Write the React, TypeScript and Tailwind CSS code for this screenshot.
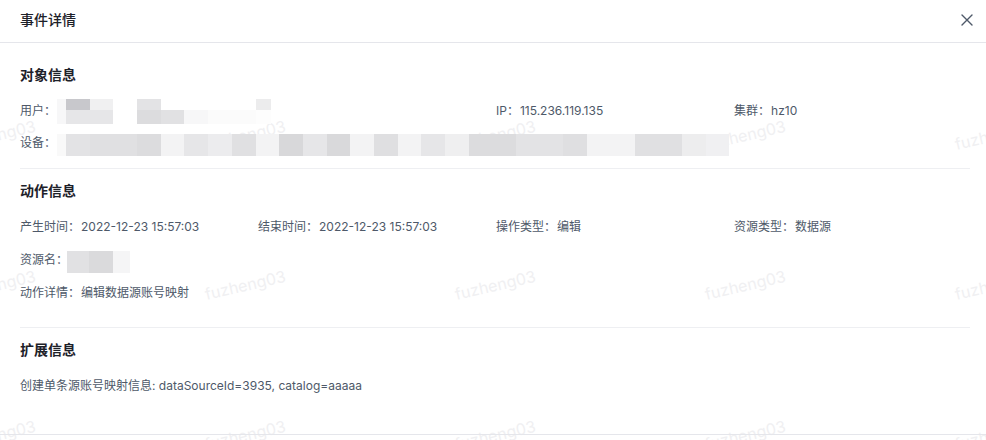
const deviceBlocks = [
  'bg-[#e3e3e5]', 'bg-[#e0e0e2]', 'bg-[#e0e0e2]', 'bg-[#dcdcde]', 'bg-[#f3f3f4]', 'bg-[#e6e6e8]', 'bg-[#ececee]',
  'bg-[#e0e0e2]', 'bg-[#f3f3f4]', 'bg-[#d8d8da]', 'bg-[#e6e6e8]', 'bg-[#d9d9db]', 'bg-[#f3f3f4]', 'bg-[#dfdfe1]',
  'bg-[#f3f3f4]', 'bg-[#e6e6e8]', 'bg-[#efeff0]', 'bg-[#dcdcde]', 'bg-[#dcdcde]', 'bg-[#e3e3e5]', 'bg-[#e3e3e5]',
  'bg-[#dfdfe1]', 'bg-[#f3f3f4]', 'bg-[#f3f3f4]', 'bg-[#e0e0e2]', 'bg-[#e0e0e2]', 'bg-[#ededee]', 'bg-[#f0f0f2]',
]

const userTop = [
  'bg-[#c8c8cc]', 'bg-[#f0f0f1]', 'bg-white', 'bg-[#e3e3e5]', 'bg-white', 'bg-white', 'bg-white', 'bg-white',
]
const userBottom = [
  'bg-[#e6e6e8]', 'bg-[#e6e6e8]', 'bg-white', 'bg-[#dcdcde]', 'bg-[#e1e1e3]', 'bg-[#f7f7f8]', 'bg-[#fbfbfb]', 'bg-[#fbfbfb]',
]

const marks: { left: number; top: number }[] = []
for (let r = 0; r < 3; r++) {
  for (let c = 0; c < 5; c++) {
    marks.push({ left: -43 + c * 250, top: 136 + r * 150 })
  }
}

function Watermark() {
  return (
    <div className="absolute inset-0 overflow-hidden pointer-events-none select-none">
      {marks.map((m, i) => (
        <span
          key={i}
          className="absolute text-[16px] leading-none text-[#f0f0f2] rotate-[-13deg] origin-bottom-left whitespace-nowrap"
          style={{ left: m.left, top: m.top }}
        >
          fuzheng03
        </span>
      ))}
    </div>
  )
}

function Field({ label, children }: { label: string; children: React.ReactNode }) {
  return (
    <div className="flex items-center h-[20px] whitespace-nowrap text-[#4e5969]">
      <span>{label}：</span>
      <span className="ml-px flex items-center">{children}</span>
    </div>
  )
}

function SectionTitle({ children }: { children: React.ReactNode }) {
  return <div className="text-[14px] leading-[22px] font-semibold text-[#1d2129]">{children}</div>
}

export default function App() {
  return (
    <div className="relative w-[986px] h-[440px] bg-white overflow-hidden font-['Inter','Noto_Sans_CJK_SC',sans-serif] text-[12px]">
      <Watermark />
      <div className="relative flex flex-col h-full">
        {/* header */}
        <div className="h-[43px] shrink-0 border-b border-[#e5e6eb] flex items-start justify-between pl-5 pr-[13px] pt-[9px]">
          <h1 className="text-[14px] leading-[22px] font-medium text-[#1d2129]">事件详情</h1>
          <button className="mt-[5px] text-[#4e5969]">
            <svg width="12" height="12" viewBox="0 0 12 12" fill="none" stroke="currentColor" strokeWidth="1.4" strokeLinecap="round">
              <path d="M1 1L11 11M11 1L1 11" />
            </svg>
          </button>
        </div>

        <div className="flex-1 pl-5 pr-[14px]">
          {/* 对象信息 */}
          <div className="pt-[21px]">
            <SectionTitle>对象信息</SectionTitle>
            <div className="grid grid-cols-4 mt-[15px]">
              <div className="col-span-2">
                <Field label="用户">
                  <span className="relative z-10 flex flex-col">
                    <span className="flex h-[11px]">
                      <span className="w-[9px] bg-[#f7f7f8]" />
                      {userTop.map((b, i) => <span key={i} className={`w-[23.7px] ${b}`} />)}
                      <span className="w-[15px] bg-[#ececed]" />
                    </span>
                    <span className="flex h-[14px]">
                      <span className="w-[9px] bg-[#f7f7f8]" />
                      {userBottom.map((b, i) => <span key={i} className={`w-[23.7px] ${b}`} />)}
                      <span className="w-[15px] bg-[#fdfdfd]" />
                    </span>
                  </span>
                </Field>
              </div>
              <Field label="IP">115.236.119.135</Field>
              <Field label="集群">hz10</Field>
            </div>
            <div className="mt-[12px]">
              <Field label="设备">
                <span className="relative z-10 flex h-[22px] mt-[4px]">
                  <span className="w-[9px] bg-[#f9f9f9]" />
                  {deviceBlocks.map((b, i) => <span key={i} className={`w-[23.7px] ${b}`} />)}
                </span>
              </Field>
            </div>
          </div>

          <div className="mt-[15px] mr-[2px] border-t border-[#eeeff2]" />

          {/* 动作信息 */}
          <div className="pt-[11px]">
            <SectionTitle>动作信息</SectionTitle>
            <div className="grid grid-cols-4 mt-[15px]">
              <Field label="产生时间">2022-12-23 15:57:03</Field>
              <Field label="结束时间">2022-12-23 15:57:03</Field>
              <Field label="操作类型">编辑</Field>
              <Field label="资源类型">数据源</Field>
            </div>
            <div className="mt-[13px]">
              <Field label="资源名">
                <span className="relative z-10 flex h-[22px] mt-[4px] -ml-[2px]">
                  <span className="w-[22px] bg-[#e1e1e3]" />
                  <span className="w-[24px] bg-[#dadadc]" />
                  <span className="w-[17px] bg-[#f5f5f6]" />
                </span>
              </Field>
            </div>
            <div className="mt-[13px]">
              <Field label="动作详情">编辑数据源账号映射</Field>
            </div>
          </div>

          <div className="mt-[24px] mr-[2px] border-t border-[#eeeff2]" />

          {/* 扩展信息 */}
          <div className="pt-[11px]">
            <SectionTitle>扩展信息</SectionTitle>
            <div className="mt-[15px] leading-[20px] text-[#4e5969]">
              创建单条源账号映射信息: dataSourceId=3935, catalog=aaaaa
            </div>
          </div>
        </div>

        <div className="h-[6px] shrink-0 border-t border-[#e5e6eb]" />
      </div>
    </div>
  )
}
